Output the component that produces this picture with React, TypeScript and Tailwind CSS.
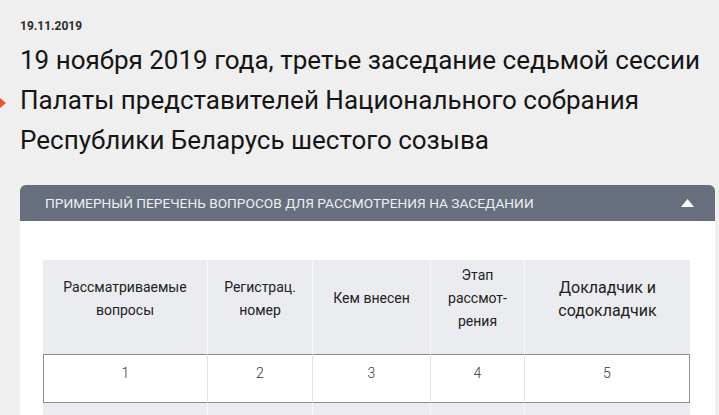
import React from 'react'

const cols = [165, 105, 118, 94, 165]

const headers: { lines: string[]; big?: boolean }[] = [
  { lines: ['Рассматриваемые', 'вопросы'] },
  { lines: ['Регистрац.', 'номер'] },
  { lines: ['Кем внесен'] },
  { lines: ['Этап', 'рассмот-', 'рения'] },
  { lines: ['Докладчик и', 'содокладчик'], big: true },
]

export default function App() {
  return (
    <div className="relative min-h-[415px] w-[719px] overflow-hidden bg-[#efefef] font-['Roboto','Liberation_Sans',sans-serif] text-[#1b1b1b]">
      {/* orange marker */}
      <svg className="absolute left-0 top-[98px]" width="7" height="10" viewBox="0 0 7 10">
        <polygon points="0,0 6,5 0,10" fill="#e8582b" />
      </svg>

      <div className="pl-5 pt-[18px]">
        <div className="text-[12px] font-bold leading-4 text-[#2b2b2b]">19.11.2019</div>
        <h1 className="mt-[6px] text-[26px] font-normal leading-[40px] text-[#151515]">
          19 ноября 2019 года, третье заседание седьмой сессии
          <br />
          Палаты представителей Национального собрания
          <br />
          Республики Беларусь шестого созыва
        </h1>
      </div>

      <div className="ml-5 mt-[25px] w-[695px]">
        {/* panel header */}
        <div className="flex h-9 items-center justify-between rounded-t-[6px] bg-[#676e7d] pl-[25px] pr-[21px]">
          <span className="text-[13.7px] uppercase text-[#eef0f4]">
            Примерный перечень вопросов для рассмотрения на заседании
          </span>
          <svg width="13" height="8" viewBox="0 0 13 8">
            <polygon points="6.5,0 13,8 0,8" fill="#ffffff" />
          </svg>
        </div>

        {/* panel body */}
        <div className="bg-white pb-10 pl-[23px] pr-[25px] pt-[39px]">
          <table className="table-fixed border-separate border-spacing-0 text-center" style={{ width: 647 }}>
            <colgroup>
              {cols.map((w, i) => (
                <col key={i} style={{ width: w }} />
              ))}
            </colgroup>
            <thead>
              <tr>
                {headers.map((h, i) => (
                  <th
                    key={i}
                    className={`h-[94px] bg-[#ebecef] px-2 pb-[21px] pt-[4px] align-middle font-normal text-[#222] ${
                      i < headers.length - 1 ? 'border-r border-[#f7f7f8]' : ''
                    } ${h.big ? 'text-[16px] leading-[23px]' : 'text-[14px] leading-[23px]'}`}
                  >
                    {h.lines.map((l, j) => (
                      <div key={j}>{l}</div>
                    ))}
                  </th>
                ))}
              </tr>
            </thead>
            <tbody>
              <tr>
                {cols.map((_, i) => (
                  <td
                    key={i}
                    className={`h-[49px] border-y border-[#8d8d8d] pt-[8px] align-top text-[14px] font-light leading-5 text-[#333] ${
                      i === 0 ? 'border-l' : ''
                    } ${i === cols.length - 1 ? 'border-r' : 'border-r border-r-[#e2e2e2]'}`}
                  >
                    {i + 1}
                  </td>
                ))}
              </tr>
              <tr>
                {cols.map((_, i) => (
                  <td
                    key={i}
                    className={`h-[60px] bg-[#ebecef] ${i < cols.length - 1 ? 'border-r border-[#f7f7f8]' : ''}`}
                  />
                ))}
              </tr>
            </tbody>
          </table>
        </div>
      </div>
    </div>
  )
}
